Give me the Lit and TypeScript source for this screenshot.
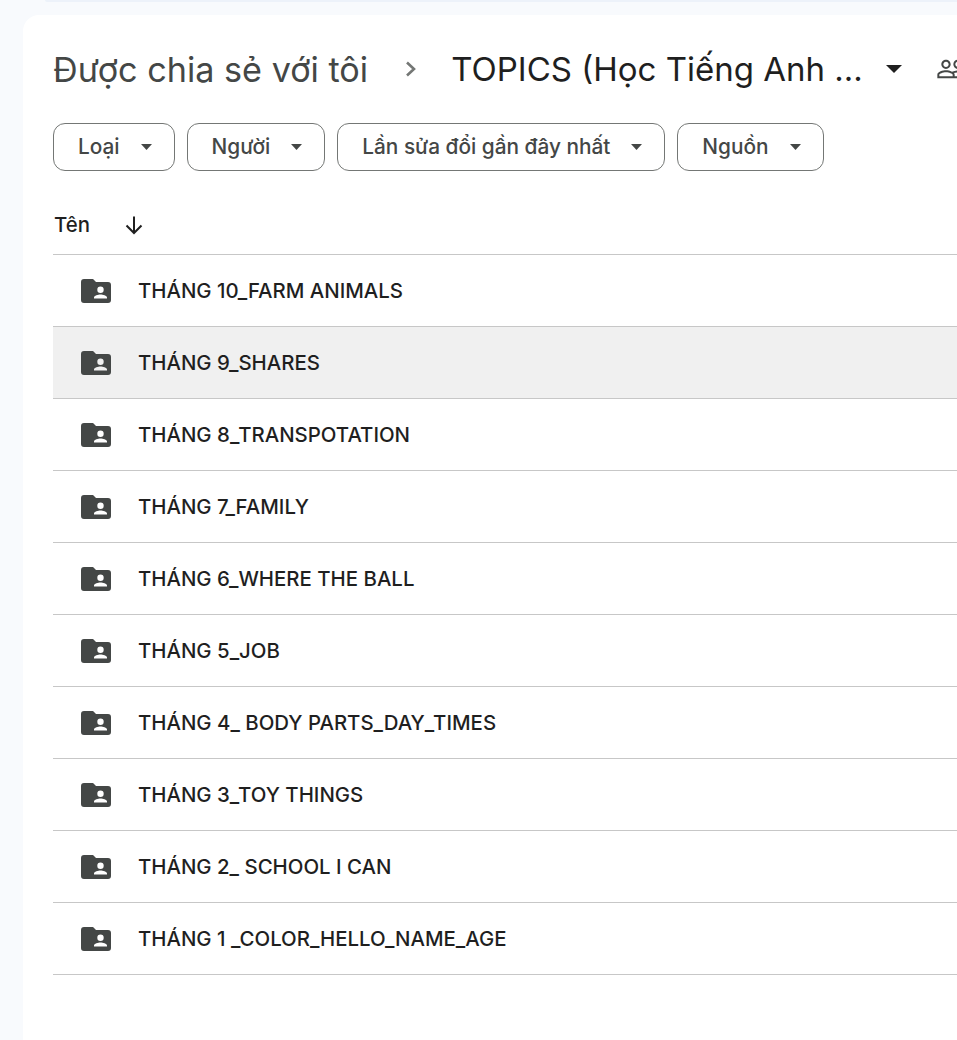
import { LitElement, html, css, svg } from "lit";
import { customElement } from "lit/decorators.js";

const ROWS = [
  "THÁNG 10_FARM ANIMALS",
  "THÁNG 9_SHARES",
  "THÁNG 8_TRANSPOTATION",
  "THÁNG 7_FAMILY",
  "THÁNG 6_WHERE THE BALL",
  "THÁNG 5_JOB",
  "THÁNG 4_ BODY PARTS_DAY_TIMES",
  "THÁNG 3_TOY THINGS",
  "THÁNG 2_ SCHOOL I CAN",
  "THÁNG 1 _COLOR_HELLO_NAME_AGE",
];
const FILTERS = ["Loại", "Người", "Lần sửa đổi gần đây nhất", "Nguồn"];

const folder = svg`<svg class="folder" viewBox="0 0 30 24" width="30" height="24">
  <path fill="#444746" fill-rule="evenodd" d="M3 0h8.600a1 1 0 0 1 .7.3L15 3h12a3 3 0 0 1 3 3v15a3 3 0 0 1-3 3H3a3 3 0 0 1-3-3V3a3 3 0 0 1 3-3Zm16.500 7.500a3.200 3.200 0 1 0 0 6.400 3.200 3.200 0 0 0 0-6.400ZM13 19.500h13v-1c0-2-4.200-3-6.500-3s-6.500 1-6.500 3Z"/>
</svg>`;

@customElement("app-root")
export class AppRoot extends LitElement {
  static styles = css`
    :host { display: block; width: 957px; height: 1040px; overflow: hidden; background: #f8fafd; font-family: Inter, Roboto, sans-serif; }
    .topbar { height: 2px; margin: 0 0 13px 45px; background: #edf2fa; border-radius: 0 0 0 2px; }
    .card { margin-left: 23px; height: 1025px; background: #fff; border-radius: 16px 0 0 0; padding: 0 0 0 30px; overflow: hidden; }
    .crumbs { display: flex; align-items: center; height: 108px; white-space: nowrap; }
    .crumb-root { font-size: 34.200px; color: #444746; }
    .crumb-sep { width: 24px; height: 24px; margin: 0 28px 0 31px; flex: none; }
    .crumb-cur { font-size: 33px; color: #1f1f1f; }
    .crumb-caret { margin-left: 23px; flex: none; }
    .crumb-people { margin-left: 34px; flex: none; }
    .filters { display: flex; gap: 12px; height: 48px; }
    .chip { display: flex; align-items: center; box-sizing: border-box; height: 48px; padding: 0 22px 0 24px; border: 1px solid #747775; border-radius: 12px; font-size: 20.800px; font-weight: 500; color: #444746; white-space: nowrap; }
    .chip span { margin-bottom: 2px; }
    .chip svg { margin-left: 21px; flex: none; }
    .head { display: flex; align-items: center; box-sizing: border-box; height: 84px; padding-top: 24px; border-bottom: 1px solid #c7c7c7; font-size: 20.400px; font-weight: 500; color: #1f1f1f; }
    .head span { margin-left: 1px; }
    .head svg { margin-left: 32px; flex: none; }
    .row { display: flex; align-items: center; height: 71px; border-bottom: 1px solid #c7c7c7; font-size: 20.400px; font-weight: 500; color: #1f1f1f; white-space: nowrap; }
    .row.sel { background: #f0f0f0; }
    .folder { margin: 0 27px 0 28px; flex: none; }
  `;

  render() {
    return html`
      <div class="topbar"></div>
      <div class="card">
        <div class="crumbs">
          <span class="crumb-root">Được chia sẻ với tôi</span>
          <svg class="crumb-sep" viewBox="0 0 24 24"><path d="M8 3 15 9.500 8 16" transform="translate(0 2.500)" fill="none" stroke="#747775" stroke-width="2.600"/></svg>
          <span class="crumb-cur">TOPICS (Học Tiếng Anh ...</span>
          <svg class="crumb-caret" width="16" height="8" viewBox="0 0 16 8"><path d="M0 0h16L8 8Z" fill="#1f1f1f"/></svg>
          <svg class="crumb-people" width="32" height="32" viewBox="0 0 24 24"><path fill="#444746" d="M16.500 13c-1.200 0-3.070.34-4.500 1-1.430-.67-3.300-1-4.500-1C5.330 13 1 14.080 1 16.250V19h22v-2.750c0-2.170-4.330-3.250-6.500-3.250zm-4 4.500h-10v-1.250c0-.54 2.560-1.750 5-1.750s5 1.210 5 1.750v1.250zm9 0H14v-1.250c0-.46-.2-.86-.52-1.220.88-.3 1.960-.53 3.020-.53 2.440 0 5 1.210 5 1.750v1.250zM7.500 12c1.930 0 3.500-1.570 3.500-3.500S9.430 5 7.500 5 4 6.570 4 8.500 5.570 12 7.500 12zm0-5.500c1.100 0 2 .9 2 2s-.9 2-2 2-2-.9-2-2 .9-2 2-2zm9 5.500c1.930 0 3.500-1.570 3.500-3.500S18.430 5 16.500 5 13 6.570 13 8.500s1.570 3.500 3.500 3.500zm0-5.500c1.100 0 2 .9 2 2s-.9 2-2 2-2-.9-2-2 .9-2 2-2z"/></svg>
        </div>
        <div class="filters">
          ${FILTERS.map(f => html`<div class="chip"><span>${f}</span><svg width="11" height="6" viewBox="0 0 11 6"><path d="M0 0h11L5.500 6Z" fill="#444746"/></svg></div>`)}
        </div>
        <div class="head"><span>Tên</span><svg width="24" height="24" viewBox="0 0 24 24"><path d="M12 3.500v16M4.500 12.500 12 20l7.500-7.500" fill="none" stroke="#1f1f1f" stroke-width="2"/></svg></div>
        ${ROWS.map((r, i) => html`<div class="row ${i === 1 ? "sel" : ""}">${folder}<span>${r}</span></div>`)}
      </div>
    `;
  }
}
